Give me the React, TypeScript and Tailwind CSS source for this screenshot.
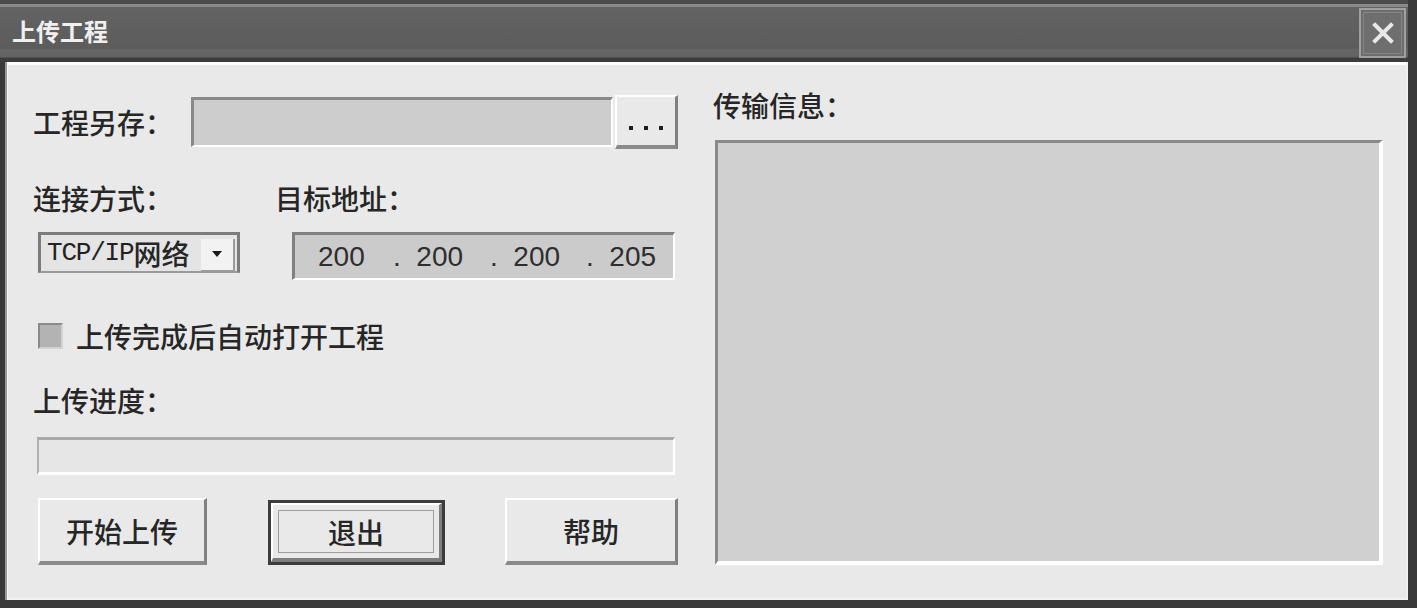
import React from "react";

const cjk = "font-['Noto_Sans_CJK_SC',sans-serif]";

function Label({ children, className = "" }: { children: React.ReactNode; className?: string }) {
  return (
    <div className={`${cjk} text-[28px] leading-[30px] font-medium text-[#262626] whitespace-nowrap ${className}`}>
      {children}
    </div>
  );
}

function RaisedButton({ children, className = "" }: { children: React.ReactNode; className?: string }) {
  return (
    <div
      className={`flex items-center justify-center border-t-2 border-l-2 border-t-white border-l-white border-r-[3px] border-b-[4px] border-r-[#808080] border-b-[#8a8a8a] bg-[#e9e9e9] ${className}`}
    >
      {children}
    </div>
  );
}

export default function App() {
  return (
    <div className="w-[1417px] h-[608px] bg-[#3a3a3a] flex flex-col pb-[8px] overflow-hidden">
      {/* Title bar */}
      <div className="h-[62px] mr-[9px] flex items-center justify-between bg-[linear-gradient(to_bottom,#4c4c4c_0px,#4c4c4c_4px,#8a8a8a_4px,#8a8a8a_7px,#636363_7px,#5c5c5c_48px,#666666_50px,#626262_57px,#3c3c3c_58px,#3c3c3c_62px)]">
        <div className={`${cjk} ml-[12px] text-[24px] leading-[30px] font-bold text-[#f0f0f0]`}>上传工程</div>
        <div className="mr-[2px] mt-[4px] w-[47px] h-[50px] border-2 border-[#a0a0a0] bg-[#6e6e6e] flex items-center justify-center">
          <div className="w-[39px] h-[42px] border border-[#868686] flex items-center justify-center">
            <svg width="24" height="24" viewBox="0 0 24 24">
              <path d="M4 4 L20 20 M20 4 L4 20" stroke="#e8e8e8" strokeWidth="4" strokeLinecap="square" />
            </svg>
          </div>
        </div>
      </div>

      {/* Body */}
      <div className="flex-1 ml-[5px] mr-[9px] flex border-l-2 border-l-[#9a9a9a] border-r-[2px] border-r-[#f0f0f0]">
        <div className="flex-1 flex bg-[#e9e9e9] border-t-[3px] border-t-[#ffffff] border-l-[1px] border-l-[#f6f6f6] border-b-[2px] border-b-[#f2f2f2] pl-[25px]">
          {/* Left column */}
          <div className="w-[645px] flex flex-col">
            {/* Row 1 */}
            <div className="mt-[30px] h-[54px] flex items-center">
              <Label className="w-[158px]">工程另存：</Label>
              <div className="w-[422px] h-[50px] bg-[#cdcdcd] border-t-[3px] border-l-[3px] border-t-[#8a8a8a] border-l-[#8a8a8a] border-b-2 border-r-2 border-b-white border-r-white" />
              <RaisedButton className="ml-[2px] w-[63px] h-[54px]">
                <div className="flex gap-[11px] mt-[14px]">
                  <div className="w-[4px] h-[4px] bg-[#1e1e1e]" />
                  <div className="w-[4px] h-[4px] bg-[#1e1e1e]" />
                  <div className="w-[4px] h-[4px] bg-[#1e1e1e]" />
                </div>
              </RaisedButton>
            </div>

            {/* Row 2 labels */}
            <div className="mt-[34px] h-[30px] flex">
              <Label className="w-[242px]">连接方式：</Label>
              <Label>目标地址：</Label>
            </div>

            {/* Row 3 controls */}
            <div className="mt-[19px] flex items-start">
              <div className="ml-[5px] w-[202px] h-[41px] flex items-center bg-[#e4e4e4] border-[3px] border-[#7c7c7c] border-b-2 border-b-[#9a9a9a]">
                <span className="ml-[6px] font-['Liberation_Mono',monospace] text-[26px] tracking-[-1.2px] text-[#222] leading-none">TCP/IP</span>
                <span className={`${cjk} text-[28px] leading-none font-medium text-[#262626]`}>网络</span>
                <div className="ml-auto mr-[2px] w-[34px] h-[33px] mt-[4px] flex items-center justify-center bg-[#f2f2f2] border-b-2 border-r-2 border-b-[#9c9c9c] border-r-[#9c9c9c]">
                  <svg width="12" height="8" viewBox="0 0 12 8">
                    <path d="M1 1 L11 1 L6 7 Z" fill="#1a1a1a" />
                  </svg>
                </div>
              </div>
              <div className="ml-[52px] w-[383px] h-[48px] flex items-center bg-[#cbcbcb] border-t-[3px] border-l-[3px] border-t-[#808080] border-l-[#808080] border-b-2 border-r-2 border-b-white border-r-white pl-[23px] font-['Liberation_Sans',sans-serif] text-[28px] text-[#2e2e2e] leading-none">
                <span className="w-[75px]">200</span>
                <span className="w-[97px] whitespace-pre">.  200</span>
                <span className="w-[96px] whitespace-pre">.  200</span>
                <span className="whitespace-pre">.  205</span>
              </div>
            </div>

            {/* Row 4 checkbox */}
            <div className="mt-[40px] h-[32px] flex items-center">
              <div className="ml-[5px] w-[25px] h-[26px] bg-[#b3b3b3] border-t-2 border-l-2 border-t-[#8a8a8a] border-l-[#8a8a8a] border-b-2 border-r-2 border-b-[#d2d2d2] border-r-[#d2d2d2]" />
              <Label className="ml-[13px]">上传完成后自动打开工程</Label>
            </div>

            {/* Row 5 */}
            <div className="mt-[33px] h-[30px] flex">
              <Label>上传进度：</Label>
            </div>

            {/* Row 6 progress */}
            <div className="mt-[22px] ml-[4px] w-[638px] h-[38px] bg-[#e6e6e6] border-t-[3px] border-t-[#a9a9a9] border-l-2 border-l-[#b0b0b0] border-b-[3px] border-b-white border-r-2 border-r-white" />

            {/* Row 7 buttons */}
            <div className="mt-[23px] flex items-start">
              <RaisedButton className="ml-[5px] w-[169px] h-[67px]">
                <Label>开始上传</Label>
              </RaisedButton>
              <div className="ml-[61px] mt-[2px] w-[177px] h-[65px] border-[3px] border-[#3c3c3c]">
                <div className="w-full h-full border-t-2 border-l-2 border-t-white border-l-white border-r-[3px] border-b-[4px] border-r-[#7e7e7e] border-b-[#7e7e7e] bg-[#e9e9e9] p-[5px]">
                  <div className="w-full h-full border border-[#9e9e9e] flex items-center justify-center">
                    <Label>退出</Label>
                  </div>
                </div>
              </div>
              <RaisedButton className="ml-[60px] w-[173px] h-[67px]">
                <Label>帮助</Label>
              </RaisedButton>
            </div>
          </div>

          {/* Right column */}
          <div className="ml-[35px] w-[670px] flex flex-col">
            <Label className="mt-[25px]">传输信息：</Label>
            <div className="mt-[20px] ml-[2px] w-[668px] h-[425px] bg-[#d0d0d0] border-t-[3px] border-l-[3px] border-t-[#8a8a8a] border-l-[#8a8a8a] border-b-[4px] border-r-[4px] border-b-white border-r-white" />
          </div>
        </div>
      </div>
    </div>
  );
}
